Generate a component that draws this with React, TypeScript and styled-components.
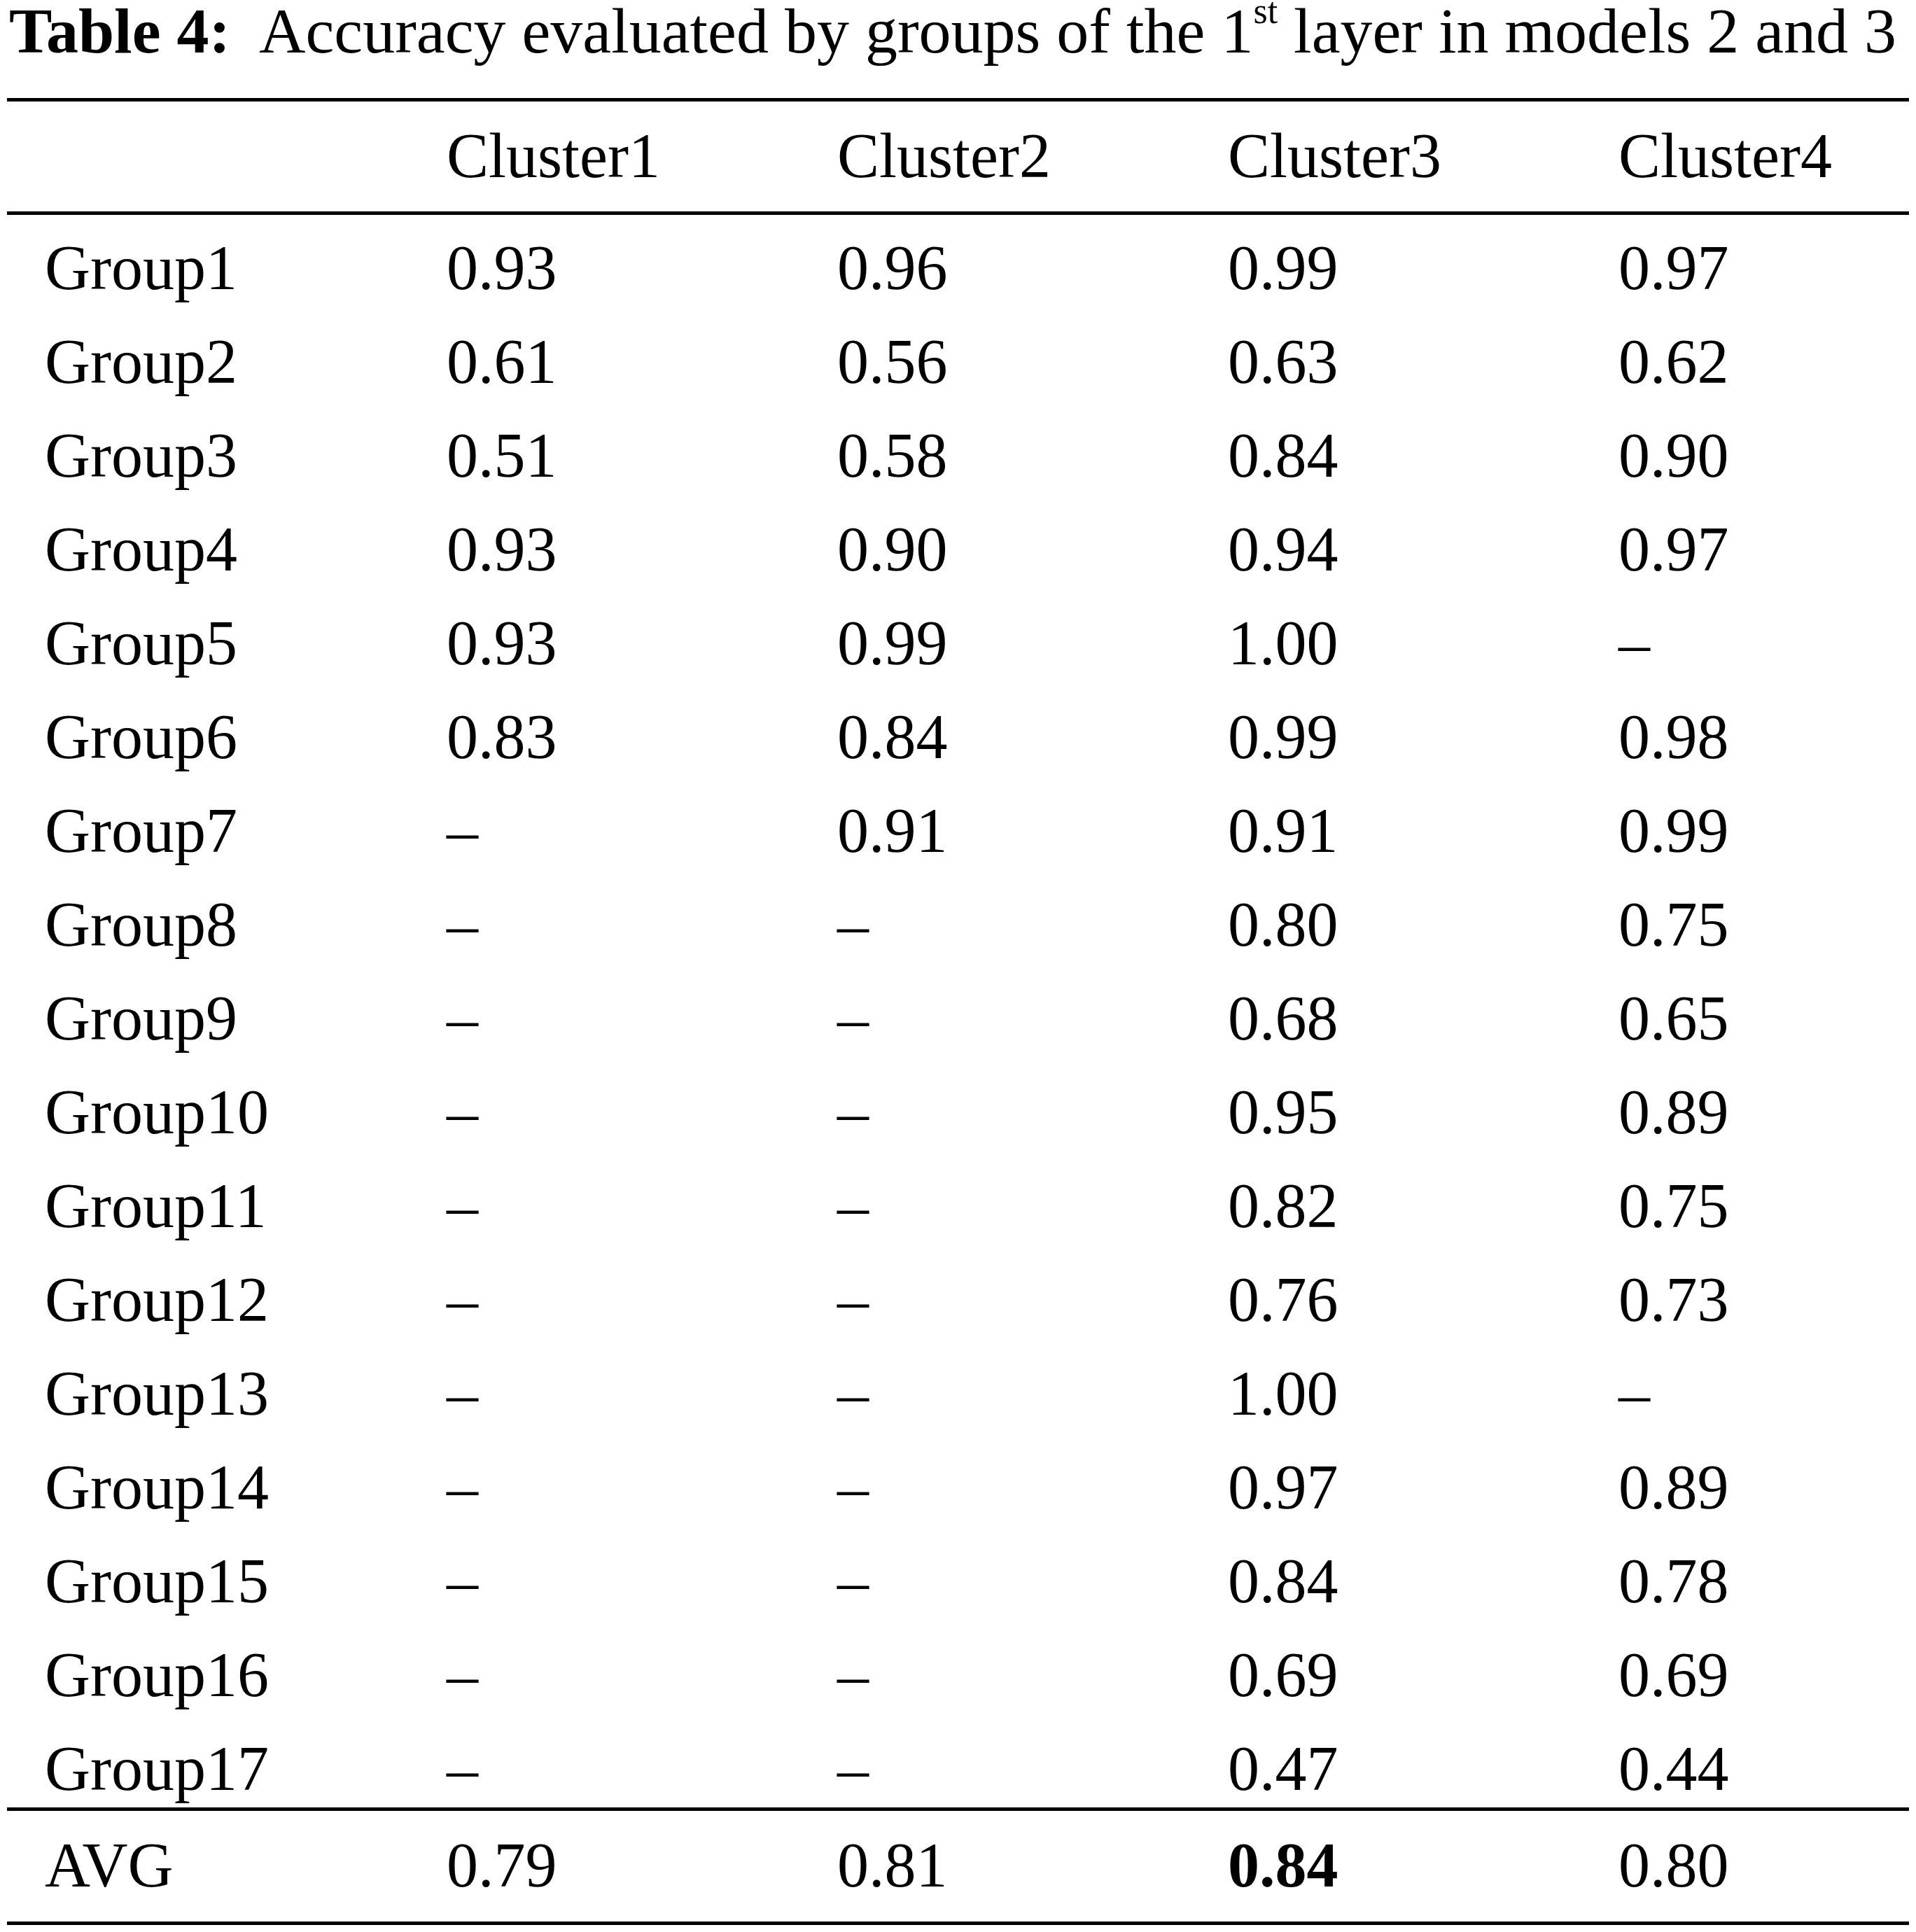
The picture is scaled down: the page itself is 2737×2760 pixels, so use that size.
import React from 'react'
import styled, { createGlobalStyle } from 'styled-components'

const GlobalStyle = createGlobalStyle`
  html, body {
    margin: 0;
    padding: 0;
    background: #ffffff;
  }
  body {
    font-family: "Liberation Serif", "Times New Roman", serif;
    color: #000000;
  }
`

const Page = styled.div`
  width: 2737px;
  padding: 0 10px;
  box-sizing: border-box;
`

const Caption = styled.div`
  font-size: 92px;
  line-height: 88px;
  height: 90px;
  padding-left: 3px;
  margin-bottom: 50px;
  white-space: pre;
`

const CaptionLabel = styled.span`
  font-weight: bold;
`

const Sup = styled.span`
  font-size: 52px;
  line-height: 0;
  vertical-align: 42px;
`

const Table = styled.div`
  width: 2717px;
  border-top: 5px solid #000;
  border-bottom: 5px solid #000;
`

const Section = styled.div<{ $top: number; $bottom: number; $ruled?: boolean }>`
  display: flex;
  flex-direction: column;
  gap: 24px;
  padding: ${(p) => p.$top}px 0 ${(p) => p.$bottom}px;
  border-bottom: ${(p) => (p.$ruled ? '5px solid #000' : 'none')};
`

const Row = styled.div`
  display: grid;
  grid-template-columns: 628px 558px 558px 558px 1fr;
  font-size: 90px;
  line-height: 110px;
  height: 110px;
`

const Label = styled.div`
  padding-left: 54px;
`

const Cell = styled.div<{ $bold?: boolean }>`
  font-weight: ${(p) => (p.$bold ? 'bold' : 'normal')};
`

const D = '\u2013'

const rows: [string, string, string, string, string][] = [
  ['Group1', '0.93', '0.96', '0.99', '0.97'],
  ['Group2', '0.61', '0.56', '0.63', '0.62'],
  ['Group3', '0.51', '0.58', '0.84', '0.90'],
  ['Group4', '0.93', '0.90', '0.94', '0.97'],
  ['Group5', '0.93', '0.99', '1.00', D],
  ['Group6', '0.83', '0.84', '0.99', '0.98'],
  ['Group7', D, '0.91', '0.91', '0.99'],
  ['Group8', D, D, '0.80', '0.75'],
  ['Group9', D, D, '0.68', '0.65'],
  ['Group10', D, D, '0.95', '0.89'],
  ['Group11', D, D, '0.82', '0.75'],
  ['Group12', D, D, '0.76', '0.73'],
  ['Group13', D, D, '1.00', D],
  ['Group14', D, D, '0.97', '0.89'],
  ['Group15', D, D, '0.84', '0.78'],
  ['Group16', D, D, '0.69', '0.69'],
  ['Group17', D, D, '0.47', '0.44'],
]

export default function App() {
  return (
    <Page>
      <GlobalStyle />
      <Caption>
        <CaptionLabel>Table 4:</CaptionLabel>
        {'  Accuracy evaluated by groups of the 1'}
        <Sup>st</Sup>
        {' layer in models 2 and 3'}
      </Caption>
      <Table>
        <Section $top={23} $bottom={24} $ruled>
          <Row>
            <Label />
            <Cell>Cluster1</Cell>
            <Cell>Cluster2</Cell>
            <Cell>Cluster3</Cell>
            <Cell>Cluster4</Cell>
          </Row>
        </Section>
        <Section $top={21} $bottom={0} $ruled>
          {rows.map((r) => (
            <Row key={r[0]}>
              <Label>{r[0]}</Label>
              <Cell>{r[1]}</Cell>
              <Cell>{r[2]}</Cell>
              <Cell>{r[3]}</Cell>
              <Cell>{r[4]}</Cell>
            </Row>
          ))}
        </Section>
        <Section $top={23} $bottom={25}>
          <Row>
            <Label>AVG</Label>
            <Cell>0.79</Cell>
            <Cell>0.81</Cell>
            <Cell $bold>0.84</Cell>
            <Cell>0.80</Cell>
          </Row>
        </Section>
      </Table>
    </Page>
  )
}
